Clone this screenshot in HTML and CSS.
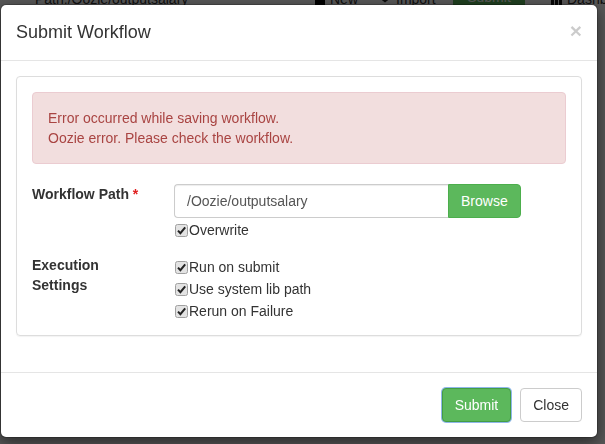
FILE: index.html
```html
<!DOCTYPE html>
<html>
<head>
<meta charset="utf-8">
<title>Submit Workflow</title>
<link rel="stylesheet" href="styles.css">
</head>
<body>
<div class="page">
  <div class="toolbar">
    <span class="path">Path:/Oozie/outputsalary</span>
    <span class="tb-btn tb-new"><i class="ico-sq"></i>New</span>
    <span class="tb-sep"></span>
    <span class="tb-btn tb-import"><i class="ico-imp"></i>Import</span>
    <span class="tb-btn tb-green">Submit</span>
    <span class="tb-btn tb-dash"><i class="ico-grid"></i>Dashboard</span>
  </div>
</div>
<div class="backdrop"></div>
<div class="modal">
  <div class="modal-header">
    <h4 class="modal-title">Submit Workflow</h4>
    <span class="close">&times;</span>
  </div>
  <div class="modal-body">
    <div class="panel">
      <div class="alert">Error occurred while saving workflow.<br>Oozie error. Please check the workflow.</div>
      <div class="form-row first">
        <div class="form-label">Workflow Path <span class="req">*</span></div>
        <div class="form-control-col">
          <div class="input-group">
            <input class="form-input" type="text" value="/Oozie/outputsalary">
            <span class="btn-browse">Browse</span>
          </div>
          <div class="check"><svg class="cb" width="13" height="13" viewBox="0 0 13 13"><rect x="0.5" y="0.5" width="12" height="12" rx="2" fill="#e3e3e3" stroke="#a0a0a0"/><path d="M3 6.6 L5.4 9.2 L10.2 3.4" fill="none" stroke="#222" stroke-width="2"/></svg>Overwrite</div>
        </div>
      </div>
      <div class="form-row">
        <div class="form-label">Execution Settings</div>
        <div class="form-control-col">
          <div class="check"><svg class="cb" width="13" height="13" viewBox="0 0 13 13"><rect x="0.5" y="0.5" width="12" height="12" rx="2" fill="#e3e3e3" stroke="#a0a0a0"/><path d="M3 6.6 L5.4 9.2 L10.2 3.4" fill="none" stroke="#222" stroke-width="2"/></svg>Run on submit</div>
          <div class="check"><svg class="cb" width="13" height="13" viewBox="0 0 13 13"><rect x="0.5" y="0.5" width="12" height="12" rx="2" fill="#e3e3e3" stroke="#a0a0a0"/><path d="M3 6.6 L5.4 9.2 L10.2 3.4" fill="none" stroke="#222" stroke-width="2"/></svg>Use system lib path</div>
          <div class="check"><svg class="cb" width="13" height="13" viewBox="0 0 13 13"><rect x="0.5" y="0.5" width="12" height="12" rx="2" fill="#e3e3e3" stroke="#a0a0a0"/><path d="M3 6.6 L5.4 9.2 L10.2 3.4" fill="none" stroke="#222" stroke-width="2"/></svg>Rerun on Failure</div>
        </div>
      </div>
    </div>
  </div>
  <div class="modal-footer">
    <span class="btn btn-success">Submit</span>
    <span class="btn btn-default">Close</span>
  </div>
</div>
</body>
</html>
```
FILE: styles.css
```css
html, body {
  margin: 0;
  padding: 0;
}
body {
  width: 605px;
  height: 444px;
  overflow: hidden;
  background: #fff;
  font-family: "Liberation Sans", Arial, sans-serif;
  font-size: 14px;
  line-height: 20px;
  color: #333;
}

/* page behind the backdrop */
.toolbar {
  display: flex;
  align-items: flex-end;
  margin-top: -11px;
  height: 20px;
  padding-left: 35px;
  white-space: nowrap;
}
.path {
  width: 278px;
  flex: none;
}
.tb-btn {
  display: flex;
  align-items: center;
  gap: 5px;
  flex: none;
  height: 20px;
}
.tb-new { width: 53px; padding-left: 2px; }
.tb-sep { width: 1px; height: 20px; background: #ccc; margin-right: 11px; }
.tb-import { width: 66px; }
.tb-green {
  width: 72px;
  margin-left: 8px;
  background: #5cb85c;
  color: #fff;
  justify-content: center;
  height: 24px;
}
.tb-dash { margin-left: 26px; }
.ico-sq { display: block; width: 10px; height: 12px; background: #000; }
.ico-imp { display: block; width: 12px; height: 12px; background: #222; clip-path: polygon(30% 0, 70% 0, 70% 40%, 100% 40%, 50% 80%, 0 40%, 30% 40%); }
.ico-grid { display: block; width: 11px; height: 11px; background: repeating-linear-gradient(90deg, #111 0 3px, transparent 3px 4px); }

.backdrop {
  position: fixed;
  inset: 0;
  background: rgba(0, 0, 0, 0.66);
}

/* modal */
.modal {
  position: fixed;
  top: 4px;
  left: 0;
  width: 598px;
  box-sizing: border-box;
  background: #fff;
  background-clip: padding-box;
  border: 1px solid rgba(0, 0, 0, 0.2);
  border-radius: 6px;
  box-shadow: 0 5px 15px rgba(0, 0, 0, 0.5);
}
.modal-header {
  display: flex;
  justify-content: space-between;
  align-items: flex-start;
  padding: 15px;
  border-bottom: 1px solid #e5e5e5;
}
.modal-title {
  margin: 0;
  font-size: 18px;
  font-weight: normal;
  line-height: 25px;
  color: #333;
}
.close {
  font-size: 21px;
  font-weight: bold;
  line-height: 21px;
  color: #000;
  opacity: 0.2;
}
.modal-body {
  padding: 15px;
}
.panel {
  border: 1px solid #ddd;
  border-radius: 4px;
  padding: 15px 15px 14px;
  margin-bottom: 21px;
  box-shadow: 0 1px 1px rgba(0, 0, 0, 0.05);
}
.alert {
  padding: 15px;
  margin-bottom: 20px;
  background: #f2dede;
  border: 1px solid #ebccd1;
  border-radius: 4px;
  color: #a94442;
}
.form-row {
  display: flex;
}
.form-row.first {
  margin-bottom: 15px;
}
.form-label {
  flex: none;
  width: 142px;
  padding-right: 32px;
  box-sizing: border-box;
  font-weight: bold;
  color: #333;
}
.req {
  color: #e02020;
}
.input-group {
  display: flex;
}
.form-input {
  width: 274px;
  height: 34px;
  box-sizing: border-box;
  margin: 0;
  padding: 6px 12px;
  border: 1px solid #ccc;
  border-right: 0;
  border-radius: 4px 0 0 4px;
  box-shadow: inset 0 1px 1px rgba(0, 0, 0, 0.075);
  font-family: inherit;
  font-size: 14px;
  line-height: 20px;
  color: #555;
  background: #fff;
  outline: none;
}
.btn-browse {
  display: block;
  height: 34px;
  box-sizing: border-box;
  padding: 6px 12px;
  background: #5cb85c;
  border: 1px solid #4cae4c;
  border-radius: 0 4px 4px 0;
  color: #fff;
}
.check {
  display: flex;
  align-items: center;
  height: 20px;
  margin-top: 2px;
  color: #333;
}
.cb {
  display: block;
  flex: none;
  margin: 1px 1px 0 1px;
}
.modal-footer {
  display: flex;
  justify-content: flex-end;
  gap: 9px;
  padding: 15px;
  border-top: 1px solid #e5e5e5;
}
.btn {
  display: block;
  height: 34px;
  box-sizing: border-box;
  padding: 6px 12px;
  border: 1px solid transparent;
  border-radius: 4px;
  font-size: 14px;
  line-height: 20px;
}
.btn-success {
  background: #5cb85c;
  border-color: #449d44;
  color: #fff;
  box-shadow: 0 0 0 1px #8fb7ea;
}
.btn-default {
  background: #fff;
  border-color: #ccc;
  color: #333;
}
```
